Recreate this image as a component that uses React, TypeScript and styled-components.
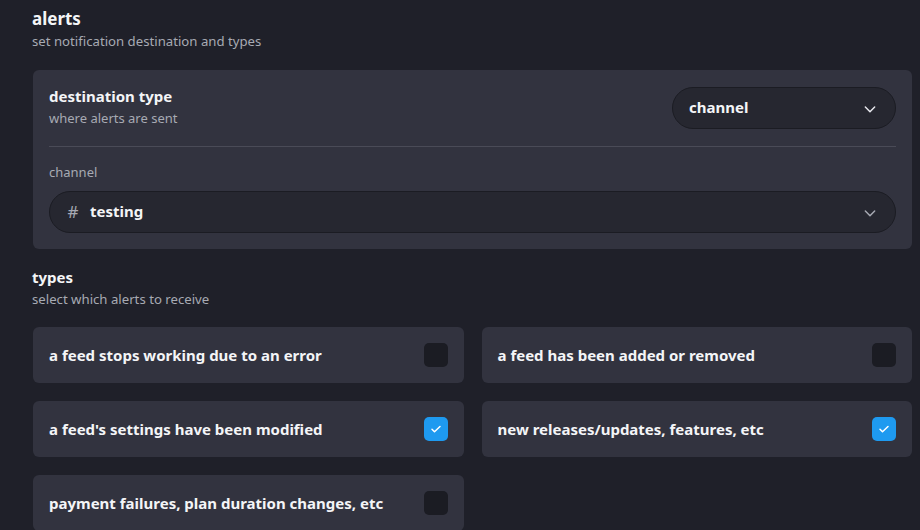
import React from "react";
import styled, { createGlobalStyle } from "styled-components";

const Global = createGlobalStyle`
  html, body { margin: 0; padding: 0; background: #1f2029; }
  body { font-family: "Noto Sans", Lato, sans-serif; color: #f0f1f4; }
  * { box-sizing: border-box; }
`;

const Page = styled.div`
  width: 920px;
  height: 530px;
  overflow: hidden;
  background: #1f2029;
  padding: 7px 8px 0 32px;
`;

const Heading = styled.h2<{ $size?: number }>`
  margin: 0;
  font-size: ${(p) => p.$size ?? 17}px;
  line-height: 24px;
  font-weight: 700;
  color: #f4f5f7;
`;

const Sub = styled.p`
  margin: 0;
  font-size: 13.2px;
  line-height: 20px;
  color: #a7aab3;
`;

const Section = styled.section<{ $mt?: number }>`
  margin-top: ${(p) => p.$mt ?? 0}px;
`;

const Card = styled.div`
  margin-top: 19px;
  margin-left: 1px;
  background: #32333f;
  border-radius: 6px;
  padding: 17px 16px 16px;
`;

const Row = styled.div`
  display: flex;
  align-items: center;
  justify-content: space-between;
`;

const RowTitle = styled.div`
  font-size: 15px;
  font-weight: 700;
  line-height: 20px;
  color: #f4f5f7;
`;

const RowSub = styled.div`
  font-size: 13px;
  line-height: 18px;
  margin-top: 3px;
  color: #a7aab3;
`;

const TitleBlock = styled.div`
  margin-top: -3px;
`;

const Divider = styled.hr`
  border: 0;
  border-top: 1px solid #4a4b57;
  margin: 17px 0 16px;
`;

const Label = styled.div`
  font-size: 13px;
  line-height: 18px;
  color: #a7aab3;
  margin-bottom: 10px;
`;

const Select = styled.div<{ $width?: string }>`
  width: ${(p) => p.$width ?? "100%"};
  height: 42px;
  border-radius: 21px;
  background: #262730;
  border: 1px solid #1b1c23;
  display: flex;
  align-items: center;
  padding: 0 17px 2px 16px;
  gap: 10px;
`;

const SelectText = styled.span`
  flex: 1;
  font-size: 15px;
  font-weight: 700;
  color: #f4f5f7;
`;

const Hash = styled.span`
  font-size: 17px;
  color: #a7aab3;
  width: 14px;
  text-align: center;
`;

const Grid = styled.div`
  margin-top: 18px;
  margin-left: 1px;
  display: grid;
  grid-template-columns: 1fr 1fr;
  column-gap: 18px;
  row-gap: 18px;
`;

const TypeCard = styled.label`
  height: 56px;
  background: #32333f;
  border-radius: 6px;
  display: flex;
  align-items: center;
  justify-content: space-between;
  padding: 0 16px 1px;
  font-size: 15px;
  font-weight: 700;
  color: #f4f5f7;
`;

const Box = styled.span<{ $checked: boolean }>`
  width: 24px;
  height: 24px;
  border-radius: 5px;
  background: ${(p) => (p.$checked ? "#1e9af0" : "#1b1c23")};
  display: flex;
  align-items: center;
  justify-content: center;
`;

const Chevron = () => (
  <svg width="16" height="16" viewBox="0 0 24 24" fill="none" stroke="currentColor" strokeWidth="2.2" strokeLinecap="round" strokeLinejoin="round">
    <path d="M5 9l7 7 7-7" />
  </svg>
);

const ChevronWrap = styled.span<{ $dim?: boolean }>`
  display: flex;
  margin-top: 3px;
  color: ${(p) => (p.$dim ? "#a7aab3" : "#e8e9ee")};
`;

const Check = () => (
  <svg width="12" height="12" viewBox="0 0 24 24" fill="none" stroke="#fff" strokeWidth="3" strokeLinecap="round" strokeLinejoin="round">
    <path d="M4 12.5l5 5L20 7" />
  </svg>
);

const types = [
  { label: "a feed stops working due to an error", checked: false },
  { label: "a feed has been added or removed", checked: false },
  { label: "a feed's settings have been modified", checked: true },
  { label: "new releases/updates, features, etc", checked: true },
  { label: "payment failures, plan duration changes, etc", checked: false },
];

export default function App() {
  return (
    <Page>
      <Global />
      <Section>
        <Heading>alerts</Heading>
        <Sub>set notification destination and types</Sub>
        <Card>
          <Row>
            <TitleBlock>
              <RowTitle>destination type</RowTitle>
              <RowSub>where alerts are sent</RowSub>
            </TitleBlock>
            <Select $width="224px">
              <SelectText>channel</SelectText>
              <ChevronWrap>
                <Chevron />
              </ChevronWrap>
            </Select>
          </Row>
          <Divider />
          <Label>channel</Label>
          <Select>
            <Hash>#</Hash>
            <SelectText>testing</SelectText>
            <ChevronWrap $dim>
              <Chevron />
            </ChevronWrap>
          </Select>
        </Card>
      </Section>
      <Section $mt={16}>
        <Heading $size={15}>types</Heading>
        <Sub>select which alerts to receive</Sub>
        <Grid>
          {types.map((t) => (
            <TypeCard key={t.label}>
              {t.label}
              <Box $checked={t.checked}>{t.checked && <Check />}</Box>
            </TypeCard>
          ))}
        </Grid>
      </Section>
    </Page>
  );
}
